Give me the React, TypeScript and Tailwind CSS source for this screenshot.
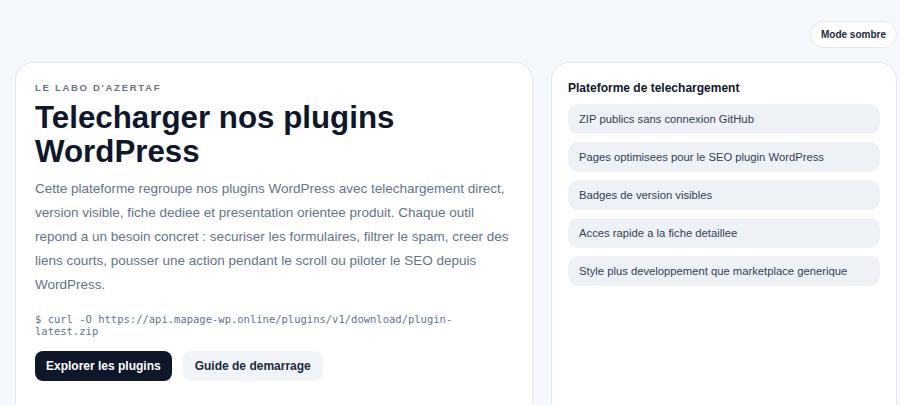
import React from 'react';

const features = [
  'ZIP publics sans connexion GitHub',
  'Pages optimisees pour le SEO plugin WordPress',
  'Badges de version visibles',
  'Acces rapide a la fiche detaillee',
  'Style plus developpement que marketplace generique',
];

const App: React.FC = () => {
  return (
    <div className="min-h-screen bg-[#f5f8fc] pl-[15px] pr-[3px] pt-[21px] font-['Liberation_Sans',Arial,sans-serif] text-slate-900">
      <div className="flex justify-end">
        <button className="h-[27px] rounded-full border border-slate-200 bg-white px-[10px] text-[10px] font-bold text-slate-800">
          Mode sombre
        </button>
      </div>

      <div className="mt-[14px] flex gap-[18px]">
        <section className="h-[360px] w-[518px] shrink-0 rounded-[18px] border border-slate-200 bg-white px-[19px] pt-[18px]">
          <p className="text-[9.5px] font-bold uppercase tracking-[0.18em] text-slate-500">Le labo d'Azertaf</p>
          <h1 className="mt-[6px] text-[31.3px] font-bold leading-[34px] text-slate-900">
            Telecharger nos plugins WordPress
          </h1>
          <p className="mt-[8px] text-[13.5px] leading-[24px] text-slate-500">
            Cette plateforme regroupe nos plugins WordPress avec telechargement direct, version visible, fiche dediee et
            presentation orientee produit. Chaque outil repond a un besoin concret : securiser les formulaires, filtrer le
            spam, creer des liens courts, pousser une action pendant le scroll ou piloter le SEO depuis WordPress.
          </p>
          <code className="mt-[16px] block font-['DejaVu_Sans_Mono',monospace] text-[10.5px] leading-[12px] text-slate-500">
            $ curl -O https://api.mapage-wp.online/plugins/v1/download/plugin-
            <br />
            latest.zip
          </code>
          <div className="mt-[14px] flex gap-[11px]">
            <button className="h-[30px] rounded-lg bg-[#0f172a] px-[11px] text-[12px] font-bold text-white">
              Explorer les plugins
            </button>
            <button className="h-[30px] rounded-lg bg-slate-100 px-[12px] text-[12px] font-bold text-slate-800">
              Guide de demarrage
            </button>
          </div>
        </section>

        <aside className="h-[360px] flex-1 rounded-[18px] border border-slate-200 bg-white px-[16px] pt-[16px]">
          <h2 className="text-[12px] font-bold text-slate-900">Plateforme de telechargement</h2>
          <ul className="mt-[7px] flex flex-col gap-[8px]">
            {features.map((f) => (
              <li
                key={f}
                className="flex h-[30px] items-center rounded-[10px] bg-[#eef2f7] px-[11px] text-[11.25px] text-slate-700"
              >
                {f}
              </li>
            ))}
          </ul>
        </aside>
      </div>
    </div>
  );
};

export default App;
